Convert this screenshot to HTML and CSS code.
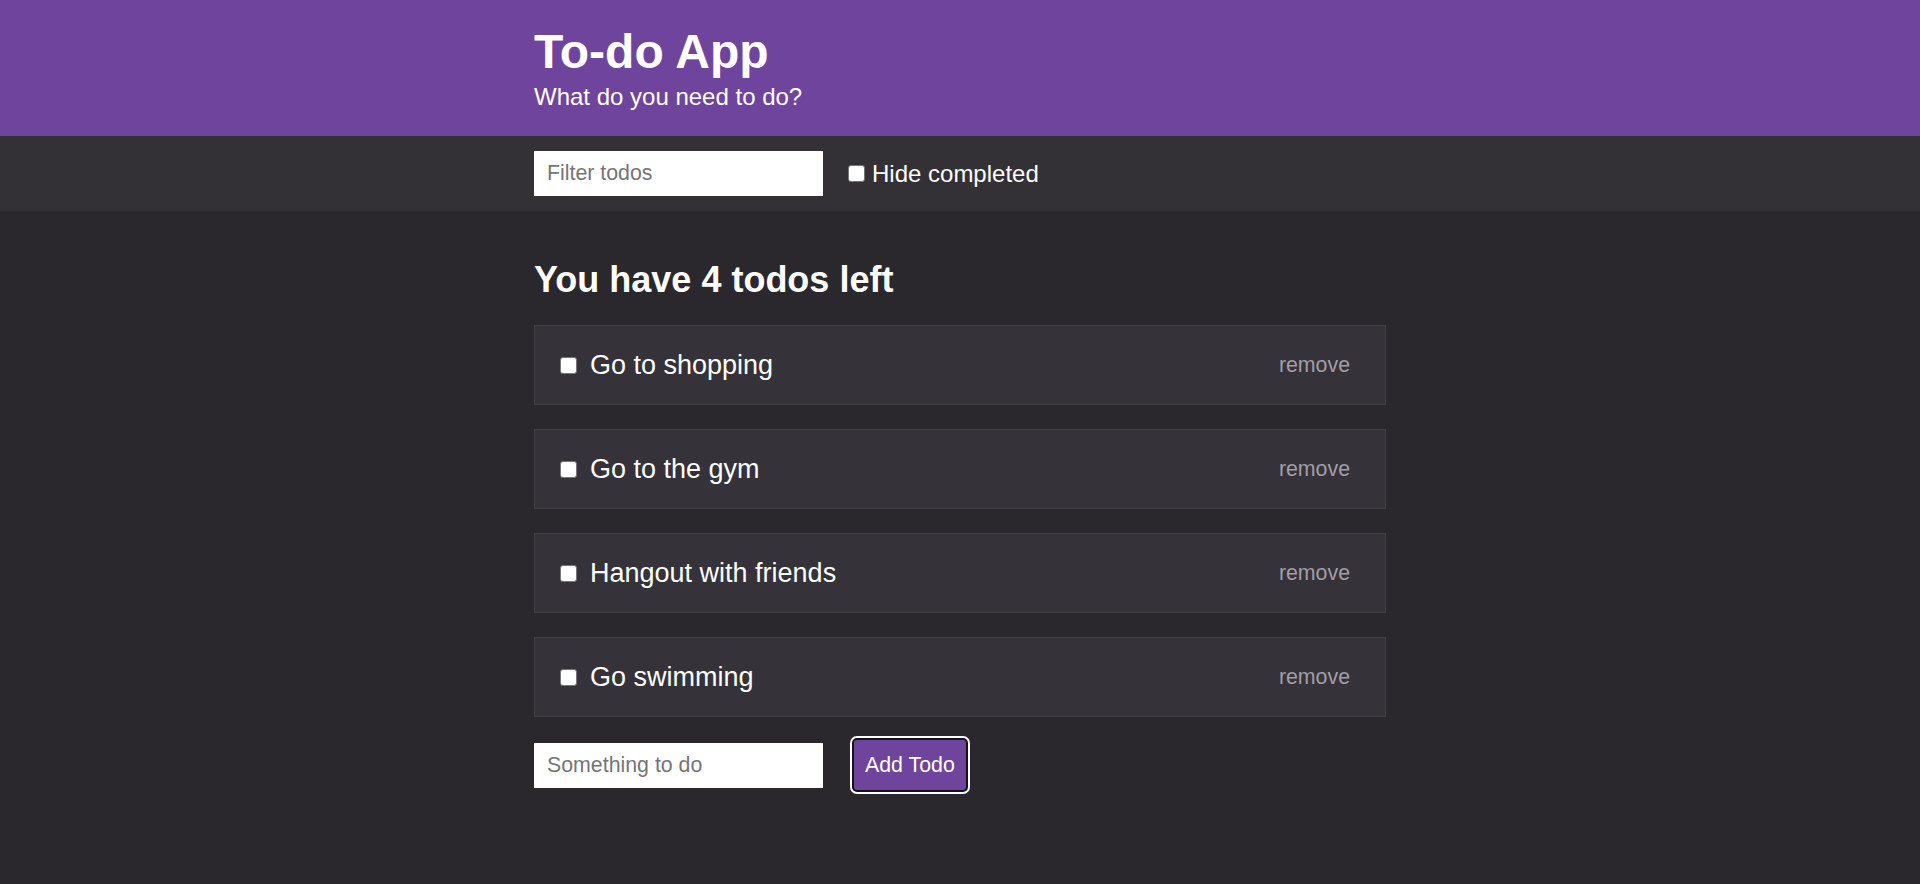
FILE: index.html
```html
<!DOCTYPE html>
<html lang="en">
<head>
<meta charset="utf-8">
<title>To-do App</title>
<link rel="stylesheet" href="styles.css">
</head>
<body>
<header class="hero">
  <div class="container">
    <h1 class="hero-title">To-do App</h1>
    <p class="hero-subtitle">What do you need to do?</p>
  </div>
</header>
<section class="actions">
  <div class="container actions-inner">
    <input class="text-input" type="text" placeholder="Filter todos">
    <label class="hide-toggle">
      <input class="check" type="checkbox">
      <span>Hide completed</span>
    </label>
  </div>
</section>
<main class="container main">
  <h2 class="summary">You have 4 todos left</h2>
  <div class="todo-list">
    <div class="todo-item">
      <label class="todo-label"><input class="check" type="checkbox"><span>Go to shopping</span></label>
      <button class="remove-btn">remove</button>
    </div>
    <div class="todo-item">
      <label class="todo-label"><input class="check" type="checkbox"><span>Go to the gym</span></label>
      <button class="remove-btn">remove</button>
    </div>
    <div class="todo-item">
      <label class="todo-label"><input class="check" type="checkbox"><span>Hangout with friends</span></label>
      <button class="remove-btn">remove</button>
    </div>
    <div class="todo-item">
      <label class="todo-label"><input class="check" type="checkbox"><span>Go swimming</span></label>
      <button class="remove-btn">remove</button>
    </div>
  </div>
  <form class="add-form">
    <input class="text-input" type="text" placeholder="Something to do">
    <button class="add-btn" type="button">Add Todo</button>
  </form>
</main>
</body>
</html>
```

FILE: styles.css
```css
html, body {
  margin: 0;
  padding: 0;
}

body {
  background: #2a282d;
  color: #ffffff;
  font-family: "Liberation Sans", Arial, sans-serif;
  min-height: 884px;
}

.container {
  width: 852px;
  margin: 0 auto;
}

.hero {
  background: #6f449c;
  padding: 24px 0 25px;
}

.hero-title {
  margin: 0 0 4px;
  font-size: 48px;
  font-weight: 700;
}

.hero-subtitle {
  margin: 0;
  font-size: 24px;
}

.actions {
  background: #333036;
  padding: 15px 0;
}

.actions-inner {
  display: flex;
  align-items: center;
}

.text-input {
  box-sizing: border-box;
  width: 289px;
  height: 45px;
  border: none;
  outline: none;
  margin: 0;
  padding: 0 13px;
  font-family: "Liberation Sans", Arial, sans-serif;
  font-size: 21.33px;
  color: #333;
  background: #ffffff;
  border-radius: 0;
}

.text-input::placeholder {
  color: #757575;
}

.hide-toggle {
  display: flex;
  align-items: center;
  margin-left: 25px;
  font-size: 24px;
  gap: 7px;
}

.check {
  appearance: none;
  -webkit-appearance: none;
  box-sizing: border-box;
  width: 17px;
  height: 17px;
  margin: 0;
  background: #ffffff;
  border: 1px solid #767676;
  border-radius: 3px;
  flex-shrink: 0;
}

.main {
  padding-top: 48px;
}

.summary {
  margin: 0 0 24px;
  font-size: 36px;
  font-weight: 700;
}

.todo-list {
  display: flex;
  flex-direction: column;
  gap: 24px;
}

.todo-item {
  box-sizing: border-box;
  height: 80px;
  display: flex;
  align-items: center;
  justify-content: space-between;
  background: #353239;
  border: 1px solid #403d44;
  padding: 0 35px 0 25px;
}

.todo-label {
  display: flex;
  align-items: center;
  gap: 13px;
  font-size: 27px;
}

.remove-btn {
  background: none;
  border: none;
  padding: 0;
  margin: 0;
  font-family: "Liberation Sans", Arial, sans-serif;
  font-size: 21.33px;
  color: #a19ea5;
  cursor: pointer;
}

.add-form {
  display: flex;
  align-items: center;
  margin: 23px 0 0;
}

.add-btn {
  margin-left: 31px;
  height: 50px;
  padding: 0 11px;
  border: none;
  border-radius: 3px;
  background: #6f449c;
  color: #ffffff;
  font-family: "Liberation Sans", Arial, sans-serif;
  font-size: 21.33px;
  box-shadow: 0 0 0 2px #141216, 0 0 0 4px #ffffff;
  cursor: pointer;
}
```
